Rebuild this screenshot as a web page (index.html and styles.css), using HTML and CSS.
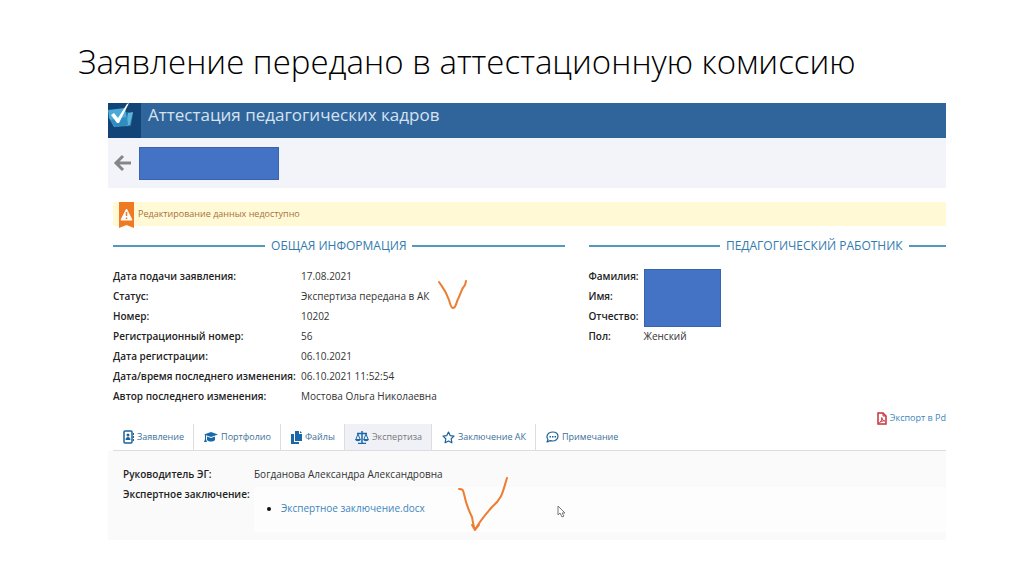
FILE: index.html
```html
<!DOCTYPE html>
<html lang="ru">

<head>
    <meta charset="utf-8">
    <meta name="viewport" content="width=device-width, initial-scale=1">
    <title>Аттестация педагогических кадров</title>
    <link rel="stylesheet" href="styles.css">
</head>

<body>
    <h1 class="slide-title">Заявление передано в аттестационную комиссию</h1>

    <div class="app">
        <header class="topbar">
            <div class="logo">
                <svg width="33" height="35" viewBox="0 0 33 35">
                    <path d="M10 8l15 2-2 13-14 1z" fill="#2274a8" />
                    <path d="M20 10l5-1-3 13-4 1z" fill="#5fb4d8" />
                    <path d="M0 7l17-2 3 17-14 2-5-9z" fill="#4aa9d6" />
                    <path d="M2 17l17-3 1 8-13 2z" fill="#2f8dc2" />
                    <path d="M3 12l3-2 4 5L19 1l2-1L11 20H9z" fill="#fff" />
                </svg>
            </div>
            <span class="app-name">Аттестация педагогических кадров</span>
        </header>

        <div class="toolbar">
            <button class="back" type="button" aria-label="Назад">
                <svg width="18" height="18" viewBox="0 0 18 18">
                    <path d="M18 9H3M10 2L3 9l7 7" fill="none" stroke="#858688" stroke-width="3" />
                </svg>
            </button>
            <div class="mask mask-name"></div>
        </div>

        <main class="content">
            <div class="notice">
                <svg width="15" height="26" viewBox="0 0 15 26">
                    <path d="M0 0h15v26l-7.500-3L0 26z" fill="#f07a22" />
                    <path d="M7.500 7L13 18H2z" fill="#fff" stroke="#fff" stroke-linejoin="round" />
                    <path d="M7.500 10v4M7.500 15.500v1.500" stroke="#f07a22" stroke-width="1.500" />
                </svg>
                <span>Редактирование данных недоступно</span>
            </div>

            <div class="info">
                <section>
                    <h2>Общая информация</h2>
                    <dl class="fields">
                        <dt>Дата подачи заявления:</dt>
                        <dd>17.08.2021</dd>
                        <dt>Статус:</dt>
                        <dd>Экспертиза передана в АК</dd>
                        <dt>Номер:</dt>
                        <dd>10202</dd>
                        <dt>Регистрационный номер:</dt>
                        <dd>56</dd>
                        <dt>Дата регистрации:</dt>
                        <dd>06.10.2021</dd>
                        <dt>Дата/время последнего изменения:</dt>
                        <dd>06.10.2021 11:52:54</dd>
                        <dt>Автор последнего изменения:</dt>
                        <dd>Мостова Ольга Николаевна</dd>
                    </dl>
                </section>
                <section>
                    <h2>Педагогический работник</h2>
                    <dl class="fields fields-person">
                        <dt>Фамилия:</dt>
                        <dd class="masked">
                            <div class="mask mask-person"></div>
                        </dd>
                        <dt>Имя:</dt>
                        <dt>Отчество:</dt>
                        <dt>Пол:</dt>
                        <dd>Женский</dd>
                    </dl>
                </section>
            </div>

            <div class="export">
                <a href="#">
                    <svg width="10" height="13" viewBox="0 0 10 13" fill="none" stroke="#c8323a">
                        <path d="M1 1h5l3 3v8H1z" stroke-width="1.500" />
                        <path d="M6 1v3h3M2.500 10.500c2-1 2.500-3 2.300-5 .4 2 1.200 3 3 3.500-2-.3-3.500 0-5.300 1.500" />
                    </svg>
                    Экспорт в Pd
                </a>
            </div>

            <nav class="tabs">
                <a href="#">
                    <svg width="11" height="14" viewBox="0 0 11 14">
                        <rect x="1" y="1" width="8" height="12" rx="1" fill="none" stroke="#1d6299" stroke-width="1.500" />
                        <circle cx="5" cy="5" r="1.500" fill="#1d6299" />
                        <path d="M2.500 10c0-4 5-4 5 0zM10 3h1v2h-1zM10 6h1v2h-1zM10 9h1v2h-1z" fill="#1d6299" />
                    </svg>
                    Заявление
                </a>
                <a href="#">
                    <svg width="14" height="12" viewBox="0 0 14 12" fill="#1b68a8">
                        <path d="M7 1l7 2.500L7 6 0 3.500z" />
                        <path d="M3 5.500L7 7l4-1.500V9c-2 2-6 2-8 0zM1 4h1v4l1 3H0l1-3z" />
                    </svg>
                    Портфолио
                </a>
                <a href="#">
                    <svg width="11" height="13" viewBox="0 0 11 13" fill="#1b68a8">
                        <path d="M4 0h4v3h3v7H4zM9 0l2 2H9z" />
                        <path d="M0 3h3v8h5v2H0z" />
                    </svg>
                    Файлы
                </a>
                <a href="#" class="active">
                    <svg width="14" height="13" viewBox="0 0 14 13" fill="none" stroke="#1b68a8">
                        <path d="M7 0v12M3 12.500h8M2 2.500h10" stroke-width="1.500" />
                        <path d="M3 3L1 8M3 3l2 5M11 3L9 8M11 3l2 5" />
                        <path d="M0 8h6c-.5 3-5.500 3-6 0zM8 8h6c-.5 3-5.500 3-6 0z" fill="#1b68a8" stroke="none" />
                    </svg>
                    Экспертиза
                </a>
                <a href="#">
                    <svg width="13" height="13" viewBox="0 0 13 13">
                        <path d="M6.500 1l1.700 3.600 3.800.5-2.800 2.700.7 4-3.400-1.900-3.400 1.900.7-4L1 5.100l3.800-.5z" fill="none"
                            stroke="#1d6299" stroke-width="1.200" stroke-linejoin="round" />
                    </svg>
                    Заключение АК
                </a>
                <a href="#">
                    <svg width="13" height="12" viewBox="0 0 13 12">
                        <path d="M2 8.500C-.5 5 2 1 6.500 1S12 3 12 5.500 9.500 10 6.500 10c-1 0-1.500-.2-2.200-.4L1 11z" fill="none"
                            stroke="#1d6299" stroke-width="1.200" stroke-linejoin="round" />
                        <path d="M3.500 5h1.500v1.500H3.500zM6 5h1.500v1.500H6zM8.500 5H10v1.500H8.500z" fill="#1d6299" />
                    </svg>
                    Примечание
                </a>
            </nav>
        </main>

        <div class="panel">
            <dl class="fields fields-expert">
                <dt>Руководитель ЭГ:</dt>
                <dd>Богданова Александра Александровна</dd>
                <dt>Экспертное заключение:</dt>
                <dd class="files">
                    <ul>
                        <li><a href="#">Экспертное заключение.docx</a></li>
                    </ul>
                </dd>
            </dl>
        </div>

        <!-- pen marks and cursor over the page -->
        <svg class="mark mark-status" width="32" height="32" viewBox="0 0 32 32">
            <path d="M2 2c4 6 7 9 10 18 1 4 2 8 4 8 3 0 3-5 5-9 3-5 3-10 7-14l1-4" />
        </svg>
        <svg class="mark mark-file" width="54" height="56" viewBox="0 0 54 56">
            <path d="M2 12c3 0 4 0 5 5 2 10 4 15 8 23 1 5 1 8 3 13 4-8 10-15 17-23 11-9 11-17 15-29M15 48l3 5 4-5" />
        </svg>
        <svg class="cursor" width="9" height="13" viewBox="0 0 9 13">
            <path d="M1 1v9l2-2 2 4 2-1-2-3h3z" fill="#fff" stroke="#777" />
        </svg>
    </div>
</body>

</html>
```

FILE: styles.css
```css
body {
    font-family: "Open Sans", "Noto Sans", sans-serif;
    font-size: 10px;
    line-height: 20px;
    margin: 0;
    padding: 36px 78px;
    background-color: #fff;
    color: #333;
}

a {
    color: #3d85bd;
    text-decoration: none;
}

svg {
    flex: none;
    display: block;
}

.slide-title {
    margin: 0 0 15px;
    font-size: 33px;
    line-height: 52px;
    font-weight: 300;
    color: #000;
    white-space: nowrap;
}

.app {
    position: relative;
    margin-left: 30px;
    overflow: hidden;
}

/* header */
.topbar {
    display: flex;
    height: 35px;
    background-color: #30659c;
}

.logo {
    background-color: #124477;
}

.app-name {
    padding-left: 7px;
    font-size: 17px;
    line-height: 24px;
    color: #d5e2f0;
}

.toolbar {
    display: flex;
    align-items: center;
    gap: 8px;
    height: 50px;
    padding-left: 5px;
    background-color: #f2f4f9;
}

.back {
    padding: 0;
    border: none;
    background: none;
    cursor: pointer;
}

.mask {
    box-sizing: border-box;
    background-color: #4472c4;
    border: 1px solid #3a63ad;
}

.mask-name {
    width: 140px;
    height: 33px;
}

.mask-person {
    width: 77px;
    height: 58px;
}

.content {
    padding: 14px 0 0 5px;
}

.notice {
    display: flex;
    gap: 4px;
    height: 24px;
    padding-left: 6px;
    font-size: 9px;
    line-height: 24px;
    background-color: #fff9d5;
    color: #a9713f;
}

/* two columns, the right one runs past the edge */
.info {
    display: grid;
    grid-template-columns: 1fr 1fr;
    gap: 24px;
    margin: 10px -94px 0 0;
}

h2 {
    display: flex;
    align-items: center;
    gap: 6px;
    margin: 0 0 10px;
    font-size: 12px;
    line-height: 20px;
    font-weight: 400;
    text-transform: uppercase;
    white-space: nowrap;
    color: #347bad;
}

h2::before,
h2::after {
    content: "";
    flex: 1;
    height: 2px;
    background-color: #5199c0;
}

.fields {
    display: grid;
    grid-template-columns: 188px 1fr;
    grid-auto-rows: 20px;
    margin: 0;
    white-space: nowrap;
}

.fields dt {
    grid-column: 1;
    font-weight: 600;
    color: #222;
}

.fields dd {
    margin: 0;
}

.fields-person {
    grid-template-columns: 55px 1fr;
}

.fields-person .masked {
    grid-row: 1 / 4;
    grid-column: 2;
    padding-top: 3px;
}

.export {
    display: flex;
    justify-content: flex-end;
    height: 12px;
    padding-top: 6px;
}

.export a {
    display: flex;
    align-items: center;
    gap: 3px;
    font-size: 9px;
}

/* tabs */
.tabs {
    display: flex;
    border-bottom: 1px solid #ddd;
}

.tabs a {
    display: flex;
    align-items: center;
    gap: 3px;
    height: 26px;
    padding: 0 9px 0 10px;
    border-right: 1px solid #ddd;
    font-size: 9px;
    color: #3c6f9a;
}

.tabs a:last-child {
    border-right: none;
}

.tabs a.active {
    background-color: #f0f1f6;
    color: #777;
}

.panel {
    padding: 13px 0 8px 15px;
    background-color: #fafafa;
}

.fields-expert {
    grid-template-columns: 131px 1fr;
    grid-auto-rows: auto;
}

.files {
    padding-top: 3px;
}

.files ul {
    margin: 0;
    padding: 11px 0 14px 27px;
    background-color: #fdfdfd;
}

.files li::marker {
    color: #111;
}

/* overlays */
.mark {
    position: absolute;
    fill: none;
    stroke: #ed7d31;
    stroke-width: 2;
    stroke-linecap: round;
    stroke-linejoin: round;
}

.mark-status {
    left: 329px;
    top: 177px;
}

.mark-file {
    left: 349px;
    top: 374px;
}

.cursor {
    position: absolute;
    left: 449px;
    top: 402px;
}
```
